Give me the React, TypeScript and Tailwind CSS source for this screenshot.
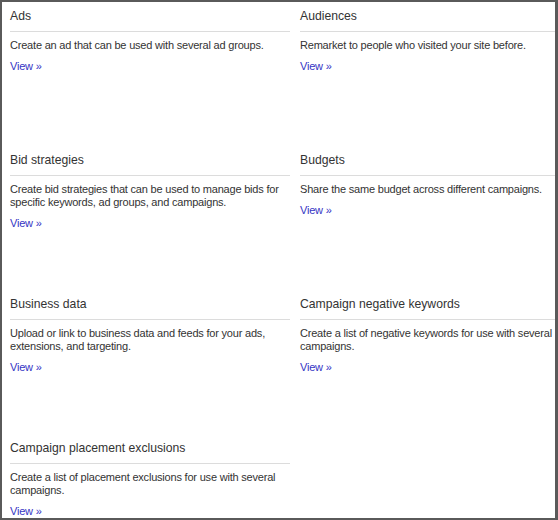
import React from "react";

type Item = { title: string; desc: string };

const items: Item[] = [
  { title: "Ads", desc: "Create an ad that can be used with several ad groups." },
  { title: "Audiences", desc: "Remarket to people who visited your site before." },
  {
    title: "Bid strategies",
    desc: "Create bid strategies that can be used to manage bids for specific keywords, ad groups, and campaigns.",
  },
  { title: "Budgets", desc: "Share the same budget across different campaigns." },
  {
    title: "Business data",
    desc: "Upload or link to business data and feeds for your ads, extensions, and targeting.",
  },
  {
    title: "Campaign negative keywords",
    desc: "Create a list of negative keywords for use with several campaigns.",
  },
  {
    title: "Campaign placement exclusions",
    desc: "Create a list of placement exclusions for use with several campaigns.",
  },
];

function Card({ item }: { item: Item }) {
  return (
    <div className="h-[144px]">
      <div className="pt-[6px] text-[12.2px] leading-[16px] text-[#333]">{item.title}</div>
      <div className="mt-[7px] border-t border-[#dcdcdc]" />
      <p className="mt-[7px] text-[11px] leading-[13px] tracking-[-0.2px] text-[#333]">{item.desc}</p>
      <a href="#" className="mt-[8px] block text-[11px] leading-[13px] tracking-[-0.2px] text-[#3434c4]">
        View »
      </a>
    </div>
  );
}

export default function App() {
  return (
    <div
      className="w-[558px] h-[520px] overflow-hidden border-t-2 border-l-2 border-b-2 border-r-[3px] border-[#5a5a5a] bg-white pl-[8px]"
      style={{ fontFamily: '"Liberation Sans", Arial, sans-serif' }}
    >
      <div className="grid grid-cols-[280px_1fr] gap-x-[10px]">
        {items.map((it) => (
          <Card key={it.title} item={it} />
        ))}
      </div>
    </div>
  );
}
